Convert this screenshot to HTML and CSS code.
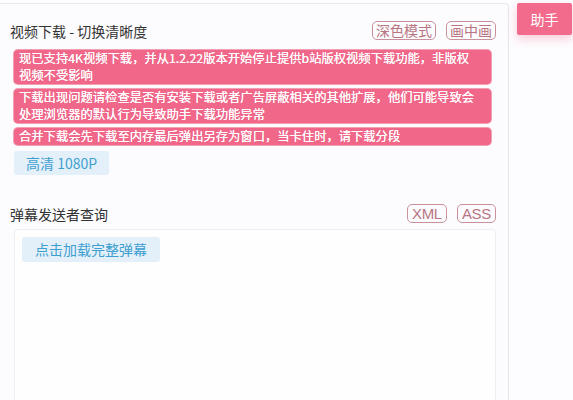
FILE: index.html
```html
<!DOCTYPE html>
<html>
<head>
  <title>下载助手</title>
  <link rel="stylesheet" href="styles.css">
</head>
<body>
  <div class="page">
    <div class="panel">
      <div class="section-head">
        <span class="section-title">视频下载 - 切换清晰度</span>
        <div class="tools">
          <span class="tool-btn">深色模式</span>
          <span class="tool-btn">画中画</span>
        </div>
      </div>
      <div class="notices">
        <div class="notice">现已支持4K视频下载，并从1.2.22版本开始停止提供b站版权视频下载功能，非版权视频不受影响</div>
        <div class="notice">下载出现问题请检查是否有安装下载或者广告屏蔽相关的其他扩展，他们可能导致会处理浏览器的默认行为导致助手下载功能异常</div>
        <div class="notice">合并下载会先下载至内存最后弹出另存为窗口，当卡住时，请下载分段</div>
      </div>
      <div class="quality-list">
        <span class="blue-btn">高清 1080P</span>
      </div>

      <div class="section-head second">
        <span class="section-title">弹幕发送者查询</span>
        <div class="tools">
          <span class="tool-btn latin">XML</span>
          <span class="tool-btn latin">ASS</span>
        </div>
      </div>
      <div class="danmaku-box">
        <span class="blue-btn">点击加载完整弹幕</span>
      </div>
    </div>
    <div class="helper-btn">助手</div>
  </div>
</body>
</html>
```
FILE: styles.css
```css
body {
  margin: 0;
  padding: 0;
  height: 100vh;
  overflow: hidden;
  background-color: #fdfcfe;
  font-family: "Noto Sans CJK SC", "Noto Sans", sans-serif;
  color: #333;
}

.page {
  display: flex;
  align-items: flex-start;
  padding-top: 3px;
}

.panel {
  width: 509px;
  height: 397px;
  overflow: hidden;
  box-sizing: border-box;
  padding: 16px 12px 0 10px;
  background-color: #fcfbfd;
  border-top: 1px solid #ebe9ee;
  border-right: 1px solid #e6e4ea;
  border-top-right-radius: 4px;
}

.section-head {
  display: flex;
  justify-content: space-between;
  align-items: center;
  height: 21px;
}

.section-head.second {
  margin-top: 28px;
}

.section-title {
  font-size: 14px;
  color: #333;
}

.tools {
  display: flex;
  gap: 10px;
}

.tool-btn {
  display: inline-block;
  height: 19px;
  line-height: 17px;
  box-sizing: border-box;
  padding: 0 3px;
  border: 1px solid #c9919c;
  border-radius: 5px;
  font-size: 14px;
  color: #b87683;
}

.tool-btn.latin {
  font-family: "Liberation Sans", sans-serif;
  font-size: 15px;
  padding: 0 4px;
  letter-spacing: -0.3px;
}

.notices {
  display: flex;
  flex-direction: column;
  gap: 5px;
  margin: 9px 5px 0 4px;
}

.notice {
  background-color: #f0678a;
  color: #fff;
  font-size: 12.3px;
  line-height: 17px;
  padding: 0 13px 0 5px;
  border-radius: 4px;
  box-shadow: 0 0 0 1px #f3a0b5;
  text-shadow: 0 0 0.4px #fff;
}

.quality-list {
  margin: 5px 0 0 4px;
}

.blue-btn {
  display: inline-block;
  height: 24px;
  line-height: 24px;
  padding: 0 12px;
  background-color: #e4f0f9;
  color: #3d9fd0;
  font-size: 14px;
  border-radius: 3px;
}

.danmaku-box {
  margin: 5px 0 0 4px;
  height: 200px;
  padding: 6px 7px;
  border: 1px solid #eeedf2;
  border-radius: 4px;
  background-color: #fefeff;
}

.danmaku-box .blue-btn {
  height: 25px;
  line-height: 25px;
  padding: 0 13px;
}

.helper-btn {
  margin-left: 8px;
  width: 55px;
  height: 32px;
  line-height: 32px;
  text-align: center;
  background-color: #f26b8c;
  color: #fff;
  font-size: 14px;
  border-radius: 2px;
  box-shadow: 0 4px 10px rgba(240, 100, 135, 0.3);
}
```
